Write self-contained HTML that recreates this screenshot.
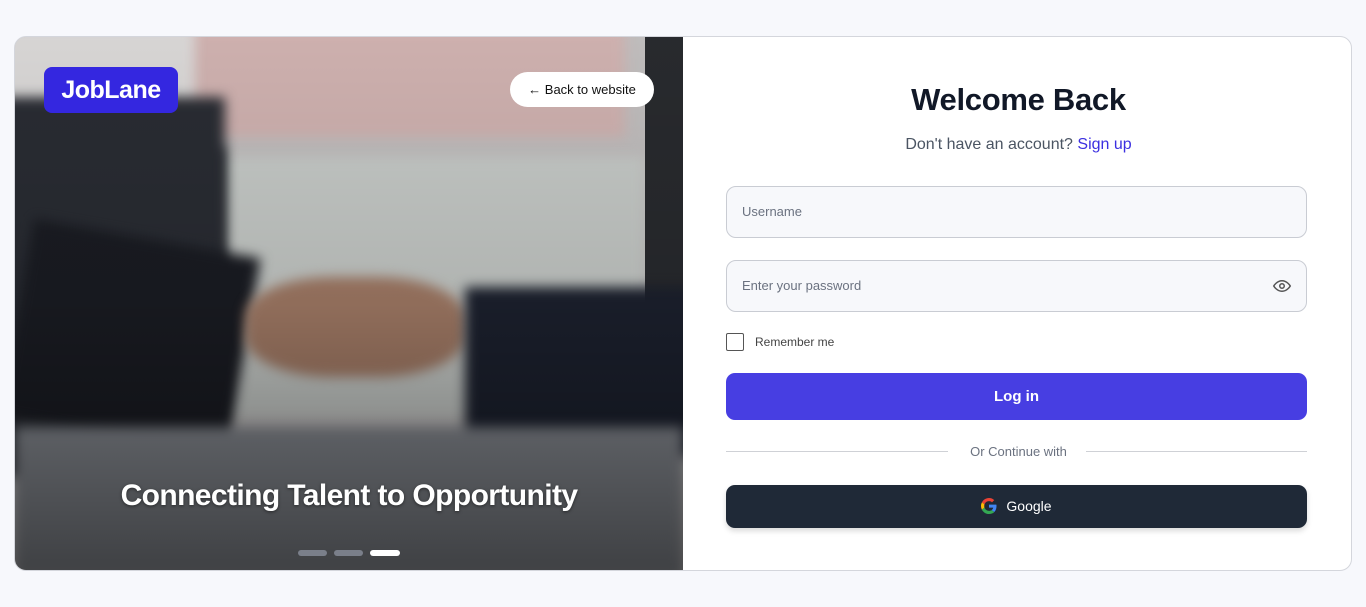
<!DOCTYPE html>
<html><head><meta charset="utf-8"><style>
*{box-sizing:border-box;margin:0;padding:0}
body{width:1366px;height:607px;background:#f7f8fc;font-family:"Liberation Sans",sans-serif;position:relative;overflow:hidden}
.card{position:absolute;left:14px;top:36px;width:1338px;height:535px;border:1px solid #d4d6dc;border-radius:12px;background:#fff;overflow:hidden}
.left{position:absolute;left:0;top:0;width:668px;height:535px;overflow:hidden;background:#b7b4b4}
.left div{position:absolute}
.blur{filter:blur(6px)}
.logo{position:absolute;left:29px;top:30px;width:134px;height:46px;background:#3427e0;border-radius:8px;color:#fff;font-weight:bold;font-size:25px;text-align:center;line-height:46px;letter-spacing:-.5px}
.back{position:absolute;left:495px;top:35px;width:144px;height:35px;background:#fff;border-radius:18px;font-size:13px;color:#111;text-align:center;line-height:35px}
.title{position:absolute;left:0;width:668px;top:442px;text-align:center;color:#fff;font-size:30px;font-weight:bold;letter-spacing:-.6px;text-shadow:0 1px 3px rgba(0,0,0,.5)}
.dot{position:absolute;top:513px;height:6px;border-radius:3px;background:#7a7f8a}
.right{position:absolute;left:669px;top:0;width:669px;height:535px}
.h{position:absolute;left:0;width:669px;top:45px;text-align:center;font-size:31px;font-weight:bold;color:#111827;letter-spacing:-.3px}
.sub{position:absolute;left:0;width:669px;top:99px;text-align:center;font-size:16px;color:#4b5563}
.sub span{color:#3b2fe0}
.inp{position:absolute;left:42px;width:581px;height:52px;border:1px solid #c9ccd3;border-radius:10px;background:#f7f8fb;font-size:13px;color:#6b7280;padding-left:15px;line-height:50px}
.cb{position:absolute;left:42px;top:296px;width:18px;height:18px;border:1.5px solid #555;border-radius:2px}
.rm{position:absolute;left:71px;top:298px;font-size:12px;color:#444}
.btn{position:absolute;left:42px;width:581px;border-radius:9px;color:#fff;text-align:center}
.line{position:absolute;top:414px;height:1px;background:#cfd1d6}
.or{position:absolute;left:0;width:669px;top:407px;text-align:center;font-size:13px;color:#6b7280}
</style></head><body>
<div class="card">
<div class="left">
 <div style="left:0;top:0;width:668px;height:535px;background:#c9c6c6"></div>
 <div class="blur" style="left:150px;top:-10px;width:460px;height:110px;background:#d8b9b7"></div>
 <div class="blur" style="left:200px;top:120px;width:430px;height:260px;background:#cfd3d0"></div>
 <div style="left:630px;top:0;width:40px;height:390px;background:#2a2c30"></div>
 <div class="blur" style="left:180px;top:110px;width:30px;height:260px;background:#3a3d42"></div>
 <div class="blur" style="left:-20px;top:-10px;width:200px;height:80px;background:#e2e0df"></div>
 <div class="blur" style="left:-20px;top:60px;width:230px;height:380px;background:#2b2e35"></div>
 <div class="blur" style="left:0;top:200px;width:230px;height:200px;background:#1b1d24;transform:rotate(10deg)"></div>
 <div class="blur" style="left:230px;top:240px;width:220px;height:100px;background:#a9806a;border-radius:40%"></div>
 <div class="blur" style="left:450px;top:250px;width:230px;height:170px;background:#1d2230"></div>
 <div class="blur" style="left:0;top:390px;width:668px;height:150px;background:#8b8f96"></div>
 <div style="left:0;top:0;width:668px;height:535px;background:linear-gradient(rgba(0,0,0,.05),rgba(0,0,0,.15) 50%,rgba(0,0,0,.55))"></div>
 <div class="logo">JobLane</div>
 <div class="back">← Back to website</div>
 <div class="title">Connecting Talent to Opportunity</div>
 <div class="dot" style="left:283px;width:29px"></div>
 <div class="dot" style="left:319px;width:29px"></div>
 <div class="dot" style="left:355px;width:30px;background:#fff"></div>
</div>
<div class="right">
 <div class="h">Welcome Back</div>
 <div class="sub">Don't have an account? <span>Sign up</span></div>
 <div class="inp" style="top:149px">Username</div>
 <div class="inp" style="top:223px">Enter your password
  <svg style="position:absolute;right:14px;top:16px" width="20" height="18" viewBox="0 0 24 24" fill="none" stroke="#555" stroke-width="2"><path d="M1 12s4-7 11-7 11 7 11 7-4 7-11 7S1 12 1 12z"/><circle cx="12" cy="12" r="3"/></svg></div>
 <div class="cb"></div><div class="rm">Remember me</div>
 <div class="btn" style="top:336px;height:47px;background:#473ee2;font-weight:bold;font-size:15px;line-height:47px">Log in</div>
 <div class="line" style="left:42px;width:222px"></div>
 <div class="line" style="left:402px;width:221px"></div>
 <div class="or">Or Continue with</div>
 <div class="btn" style="top:448px;height:43px;background:#1f2937;font-size:14px;line-height:43px;box-shadow:0 3px 6px rgba(0,0,0,.15)">
  <svg style="vertical-align:-3px;margin-right:9px" width="16" height="16" viewBox="0 0 48 48"><path fill="#EA4335" d="M24 9.5c3.5 0 6.6 1.2 9 3.5l6.7-6.7C35.6 2.4 30.2 0 24 0 14.6 0 6.6 5.4 2.7 13.2l7.8 6C12.4 13.7 17.7 9.5 24 9.5z"/><path fill="#4285F4" d="M46.5 24.5c0-1.6-.1-3.1-.4-4.5H24v9h12.7c-.6 3-2.2 5.5-4.7 7.200l7.6 5.9c4.4-4.1 6.9-10.1 6.9-17.6z"/><path fill="#FBBC05" d="M10.5 28.8c-.5-1.5-.8-3.1-.8-4.8s.3-3.3.8-4.8l-7.8-6C1 16.5 0 20.1 0 24s1 7.5 2.7 10.8l7.8-6z"/><path fill="#34A853" d="M24 48c6.5 0 11.9-2.1 15.6-5.8l-7.6-5.9c-2.1 1.4-4.8 2.3-8 2.3-6.300 0-11.6-4.2-13.5-9.9l-7.8 6C6.6 42.6 14.6 48 24 48z"/></svg>Google</div>
</div>
</div>
</body></html>
